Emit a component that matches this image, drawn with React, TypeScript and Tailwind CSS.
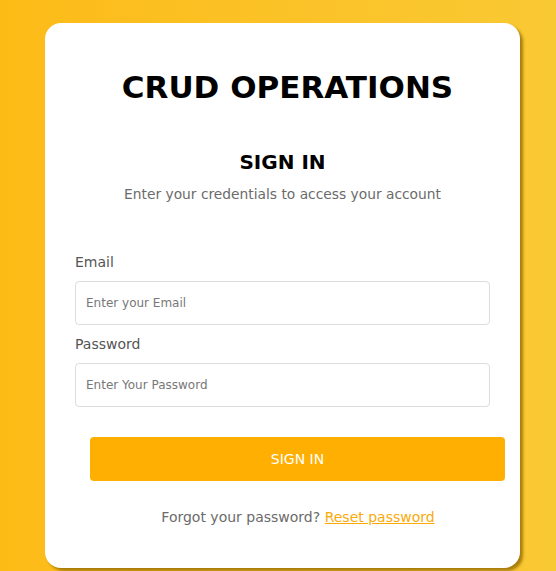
import React from "react";

const FONT = "font-['DejaVu_Sans',sans-serif]";

function Field({ label, placeholder, type }: { label: string; placeholder: string; type: string }) {
  return (
    <div className="flex flex-col">
      <label className="text-[14px] leading-[20px] text-[#555555]">{label}</label>
      <input
        type={type}
        placeholder={placeholder}
        className="mt-[9px] h-[44px] w-full rounded-[4px] border border-[#dddddd] bg-white px-[10px] text-[12px] text-[#333] placeholder:text-[#777777] outline-none"
      />
    </div>
  );
}

export default function App() {
  return (
    <div className={`${FONT} min-h-[571px] w-full overflow-hidden bg-gradient-to-r from-[#fdbb16] to-[#f9c933] pt-[23px]`}>
      <div className="ml-[45px] h-[545px] w-[475px] rounded-[16px] bg-white px-[30px] pt-[46px] shadow-[3px_3px_3px_rgba(140,100,0,0.75)]">
        <h1 className="pl-[10px] text-center text-[31px] font-bold leading-[36px] text-black">CRUD OPERATIONS</h1>

        <h2 className="mt-[44px] text-center text-[20px] font-bold leading-[26px] text-black">SIGN IN</h2>
        <p className="mt-[9px] text-center text-[13.8px] leading-[20px] text-[#6b6b6b]">
          Enter your credentials to access your account
        </p>

        <form className="mt-[48px] flex flex-col gap-[9px]" onSubmit={(e) => e.preventDefault()}>
          <Field label="Email" placeholder="Enter your Email" type="email" />
          <Field label="Password" placeholder="Enter Your Password" type="password" />

          <button
            type="submit"
            className="ml-[15px] mt-[21px] h-[44px] w-[415px] rounded-[4px] bg-[#feaf02] text-[14px] text-white"
          >
            SIGN IN
          </button>
        </form>

        <p className="mt-[26px] pl-[31px] text-center text-[14px] text-[#6b6b6b]">
          Forgot your password?{" "}
          <a href="#" className="text-[#fbaa08] underline">
            Reset password
          </a>
        </p>
      </div>
    </div>
  );
}
